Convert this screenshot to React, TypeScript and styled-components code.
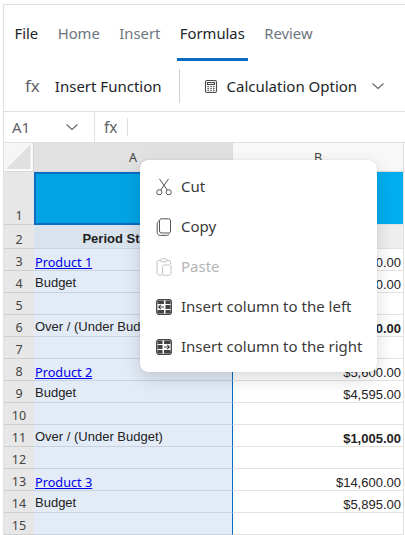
import React from "react";
import styled, { createGlobalStyle } from "styled-components";

const Global = createGlobalStyle`
  html, body { margin: 0; padding: 0; background: #fff; }
  body { width: 405px; height: 535px; overflow: hidden; }
`;

const UI = `"Noto Sans", "Open Sans", sans-serif`;
const Cell = `"Liberation Sans", Arial, sans-serif`;

const Frame = styled.div`
  position: relative;
  box-sizing: border-box;
  width: 405px;
  height: 535px;
  padding-left: 3px;
  padding-top: 4px;
  overflow: hidden;
  background: #fff;
`;
const Shell = styled.div`
  border-top: 1px solid #e0e0e0;
  border-left: 1px solid #e0e0e0;
  height: 530px;
  overflow: hidden;
`;
const Tabs = styled.div`
  display: flex;
  gap: 13.5px;
  height: 56px;
  padding-left: 7.5px;
`;
const Tab = styled.div<{ $active?: boolean; $dark?: boolean }>`
  box-sizing: border-box;
  height: 56px;
  padding: 17px 3px 0;
  font: 400 14.8px/22px ${UI};
  color: ${(p) => (p.$dark || p.$active ? "#212529" : "#6c757d")};
  border-bottom: 3px solid ${(p) => (p.$active ? "#0a6bbf" : "transparent")};
`;
const Ribbon = styled.div`
  box-sizing: border-box;
  display: flex;
  align-items: center;
  height: 51px;
  padding-left: 21px;
  border-bottom: 1px solid #e0e0e0;
`;
const Fx = styled.span<{ $small?: boolean }>`
  font: 400 ${(p) => (p.$small ? "15.5px" : "17px")}/20px ${UI};
  color: #5f6368;
`;
const RibbonLabel = styled.span`
  font: 400 15px/20px ${UI};
  color: #212529;
`;
const InsertLabel = styled(RibbonLabel)`
  margin-left: 15px;
`;
const CalcLabel = styled(RibbonLabel)`
  margin-left: 9px;
`;
const RibbonSep = styled.div`
  width: 1px;
  height: 34px;
  margin: 0 24px 0 17px;
  background: #d0d0d0;
`;
const RibbonChevron = styled.span`
  display: flex;
  margin-left: 14px;
`;
const FormulaBar = styled.div`
  box-sizing: border-box;
  display: flex;
  align-items: center;
  height: 31px;
  border-bottom: 1px solid #e0e0e0;
`;
const NameBox = styled.div`
  box-sizing: border-box;
  display: flex;
  align-items: center;
  width: 91px;
  height: 30px;
  padding-left: 8px;
  border-right: 1px solid #e0e0e0;
  font: 400 15px/20px ${UI};
  color: #5f6368;
`;
const NameText = styled.span`
  width: 53px;
`;
const FxBox = styled.div`
  display: flex;
  align-items: center;
  height: 18px;
  padding: 0 9px;
  border-right: 1px solid #e0e0e0;
`;
const Head = styled.div`
  box-sizing: border-box;
  display: flex;
  height: 29px;
  border-bottom: 1px solid #d8d8d8;
`;
const Corner = styled.div`
  box-sizing: border-box;
  width: 30px;
  background: #f6f6f6;
  border-right: 1px solid #d4d4d4;
  overflow: hidden;
`;
const CornerMark = styled.svg`
  display: block;
`;
const ColHead = styled.div<{ $selected?: boolean }>`
  box-sizing: border-box;
  display: flex;
  align-items: center;
  justify-content: center;
  width: ${(p) => (p.$selected ? "199px" : "171px")};
  padding-top: 2px;
  font: 400 12.5px/16px ${UI};
  color: #444;
  background: ${(p) => (p.$selected ? "#e1e1e1" : "#f8f8f8")};
  border-right: 1px solid #dcdcdc;
`;
const Row = styled.div<{ $h: number }>`
  display: flex;
  height: ${(p) => p.$h}px;
`;
const RowHead = styled.div`
  box-sizing: border-box;
  display: flex;
  align-items: flex-end;
  justify-content: center;
  width: 30px;
  font: 400 12.5px/16px ${UI};
  color: #444;
  background: #e7e7e7;
  border-bottom: 1px solid #cfcfcf;
`;
const ACell = styled.div<{ $bg?: string; $active?: boolean; $align?: string; $bold?: boolean }>`
  box-sizing: border-box;
  display: flex;
  align-items: flex-end;
  justify-content: ${(p) => p.$align || "flex-start"};
  width: 199px;
  padding: 0 1px 2px;
  font: ${(p) => (p.$bold ? 700 : 400)} 13px/15px ${Cell};
  color: #222;
  white-space: nowrap;
  overflow: hidden;
  background: ${(p) => p.$bg || "#e2ebf6"};
  border-bottom: ${(p) => (p.$active ? "2px solid #0a6bbf" : "1px solid #c8d3df")};
  border-left: ${(p) => (p.$active ? "2px solid #0a6bbf" : "0")};
  border-top: ${(p) => (p.$active ? "2px solid #0a6bbf" : "0")};
  border-right: 1px solid #0a6bbf;
`;
const BCell = styled.div<{ $bg?: string; $bold?: boolean }>`
  box-sizing: border-box;
  display: flex;
  align-items: flex-end;
  justify-content: flex-end;
  width: 171px;
  padding: 0 2px 0 0;
  font: ${(p) => (p.$bold ? 700 : 400)} 13px/15px ${Cell};
  color: #222;
  background: ${(p) => p.$bg || "#fff"};
  border-bottom: 1px solid #e2e2e2;
  border-right: 1px solid #e2e2e2;
`;
const ProductLink = styled.a`
  margin-bottom: -2px;
  color: #0000ee;
  text-decoration: underline;
  font: 400 12.7px/15px ${UI};
`;
const Menu = styled.div`
  position: absolute;
  left: 140px;
  top: 160px;
  box-sizing: border-box;
  width: 237px;
  height: 212px;
  padding: 7px 0;
  background: #fff;
  border-radius: 8px;
  box-shadow: 0 0 1px rgba(0, 0, 0, 0.25), 0 7px 18px rgba(0, 0, 0, 0.14);
`;
const MenuItem = styled.div<{ $disabled?: boolean }>`
  box-sizing: border-box;
  display: flex;
  align-items: center;
  height: 40px;
  padding: 0 0 2px 16px;
  font: 400 15px/20px ${UI};
  color: ${(p) => (p.$disabled ? "#b5b5b5" : "#3b3b3b")};
`;
const MenuIcon = styled.svg<{ $disabled?: boolean }>`
  flex: none;
  width: 16px;
  height: 18px;
  margin: 2px 9px 0 0;
  fill: none;
  stroke: ${(p) => (p.$disabled ? "#c4c4c4" : "#555")};
  stroke-width: 1;
`;

const Chevron = () => (
  <svg width="14" height="14" viewBox="0 0 14 14" fill="none" stroke="#5f6368" strokeWidth="1.1">
    <path d="M1.5 4.5 7 9.5l5.5-5" />
  </svg>
);

const Calc = () => (
  <svg width="14" height="15" viewBox="0 0 14 15" fill="none" stroke="#4b4b4b" strokeWidth="1.1">
    <rect x="1.5" y="1.5" width="11" height="12" rx="1.5" />
    <rect x="3.5" y="3.5" width="7" height="2" />
    <path d="M3.5 7.6h1.4M6.3 7.6h1.4M9.1 7.6h1.4M3.5 9.6h1.4M6.3 9.6h1.4M9.1 9.6h1.4M3.5 11.6h1.4M6.3 11.6h1.4M9.1 11.6h1.4" strokeWidth="1.3" />
  </svg>
);

const InsertLeftIcon = () => (
  <MenuIcon viewBox="0 0 16 18">
    <rect x="0.7" y="1.7" width="14.6" height="14.6" rx="2.2" fill="#fff" stroke="#444" strokeWidth="1.3" />
    <path d="M1.5 2.5H8V6H1.5zM1.5 12H8v3.5H1.5zM9.5 2.5h5V6h-5zM9.5 7h5v4h-5zM9.5 12h5v3.5h-5z" fill="#444" stroke="none" />
    <path d="M8 9H2.6M4.8 6.8 2.6 9l2.2 2.2" stroke="#444" strokeWidth="1.1" />
  </MenuIcon>
);

const InsertRightIcon = () => (
  <MenuIcon viewBox="0 0 16 18">
    <rect x="0.7" y="1.7" width="14.6" height="14.6" rx="2.2" fill="#fff" stroke="#444" strokeWidth="1.3" />
    <path d="M1.5 2.5h5V6h-5zM1.5 7h5v4h-5zM1.5 12h5v3.5h-5zM8 2.5h6.5V6H8zM8 12h6.5v3.5H8z" fill="#444" stroke="none" />
    <path d="M8 9h5.4M11.2 6.8 13.4 9l-2.2 2.2" stroke="#444" strokeWidth="1.1" />
  </MenuIcon>
);

type RowData = { n: number; a?: string; link?: boolean; b?: string; bold?: boolean };
const rows: RowData[] = [
  { n: 3, a: "Product 1", link: true, b: "$14,500.00" },
  { n: 4, a: "Budget", b: "$5,500.00" },
  { n: 5 },
  { n: 6, a: "Over / (Under Budget)", b: "$9,000.00", bold: true },
  { n: 7 },
  { n: 8, a: "Product 2", link: true, b: "$5,600.00" },
  { n: 9, a: "Budget", b: "$4,595.00" },
  { n: 10 },
  { n: 11, a: "Over / (Under Budget)", b: "$1,005.00", bold: true },
  { n: 12 },
  { n: 13, a: "Product 3", link: true, b: "$14,600.00" },
  { n: 14, a: "Budget", b: "$5,895.00" },
  { n: 15 },
];

export default function App() {
  return (
    <Frame>
      <Global />
      <Shell>
        <Tabs>
          <Tab $dark>File</Tab>
          <Tab>Home</Tab>
          <Tab>Insert</Tab>
          <Tab $active>Formulas</Tab>
          <Tab>Review</Tab>
        </Tabs>
        <Ribbon>
          <Fx>fx</Fx>
          <InsertLabel>Insert Function</InsertLabel>
          <RibbonSep />
          <Calc />
          <CalcLabel>Calculation Option</CalcLabel>
          <RibbonChevron>
            <Chevron />
          </RibbonChevron>
        </Ribbon>
        <FormulaBar>
          <NameBox>
            <NameText>A1</NameText>
            <Chevron />
          </NameBox>
          <FxBox>
            <Fx $small>fx</Fx>
          </FxBox>
        </FormulaBar>
        <Head>
          <Corner>
            <CornerMark width="29" height="28" viewBox="0 0 29 28">
              <path d="M2 26 27 1v25z" fill="#e0e0e0" />
              <path d="M27.5 1v26.5H2" fill="none" stroke="#fff" strokeWidth="1.4" />
            </CornerMark>
          </Corner>
          <ColHead $selected>A</ColHead>
          <ColHead>B</ColHead>
        </Head>
        <Row $h={53}>
          <RowHead>1</RowHead>
          <ACell $active $bg="#00a4e4" />
          <BCell $bg="#00aeef" />
        </Row>
        <Row $h={24}>
          <RowHead>2</RowHead>
          <ACell $bg="#d8e3ee" $align="center" $bold>
            Period Starting :
          </ACell>
          <BCell $bg="#eeeeee" $bold />
        </Row>
        {rows.map((r) => (
          <Row key={r.n} $h={22}>
            <RowHead>{r.n}</RowHead>
            <ACell>
              {r.link ? <ProductLink href="#">{r.a}</ProductLink> : r.a}
            </ACell>
            <BCell $bold={r.bold}>{r.b}</BCell>
          </Row>
        ))}
      </Shell>
      <Menu>
        <MenuItem>
          <MenuIcon viewBox="0 0 16 18">
            <circle cx="3.3" cy="14.2" r="2.6" />
            <circle cx="12.7" cy="14.2" r="2.6" />
            <path d="M4.8 12 12.6 0.8M11.2 12 3.4 0.8" />
          </MenuIcon>
          Cut
        </MenuItem>
        <MenuItem>
          <MenuIcon viewBox="0 0 16 18">
            <rect x="3.5" y="0.8" width="11" height="14.2" rx="2" />
            <path d="M3.5 2.8C2.2 3.3 1.2 4.3 1.2 5.8v8.4c0 1.9 1.2 3.2 3 3.2h6.6c1.1 0 2-.6 2.4-1.6" />
          </MenuIcon>
          Copy
        </MenuItem>
        <MenuItem $disabled>
          <MenuIcon $disabled viewBox="0 0 16 18">
            <path d="M4.5 2.5H2.5A1.5 1.5 0 0 0 1 4v11.5A1.5 1.5 0 0 0 2.5 17H6M11 2.5h2A1.5 1.5 0 0 1 14.5 4v2" />
            <rect x="4.5" y="0.8" width="6.5" height="3" rx="1" />
            <rect x="6.5" y="7" width="8.5" height="10.2" rx="1.5" />
          </MenuIcon>
          Paste
        </MenuItem>
        <MenuItem>
          <InsertLeftIcon />
          Insert column to the left
        </MenuItem>
        <MenuItem>
          <InsertRightIcon />
          Insert column to the right
        </MenuItem>
      </Menu>
    </Frame>
  );
}
